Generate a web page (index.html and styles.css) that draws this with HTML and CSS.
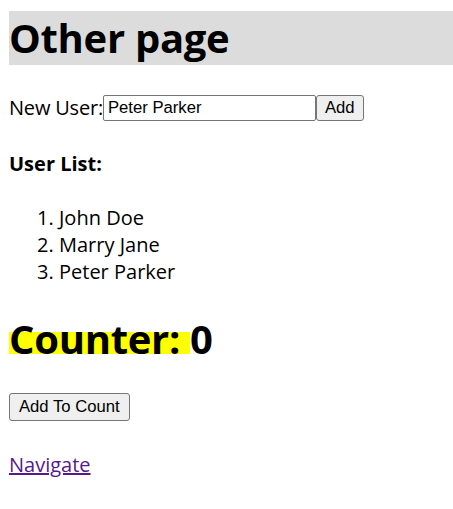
FILE: index.html
```html
<!DOCTYPE html>
<html lang="en">
<head>
    <meta charset="UTF-8">
    <title>Other page</title>
    <link rel="stylesheet" href="styles.css">
</head>
<body>
    <h1 class="page-title">Other page</h1>

    <form class="user-form">
        <label for="newUser">New User:</label>
        <input id="newUser" class="user-input" type="text" value="Peter Parker">
        <button type="submit" class="btn">Add</button>
    </form>

    <h4 class="list-title">User List:</h4>
    <ol class="user-list">
        <li>John Doe</li>
        <li>Marry Jane</li>
        <li>Peter Parker</li>
    </ol>

    <h1 class="counter"><span class="highlight">Counter: </span>0</h1>

    <div class="count-row">
        <button class="btn">Add To Count</button>
    </div>

    <p class="nav"><a href="#" class="nav-link">Navigate</a></p>
</body>
</html>
```

FILE: styles.css
```css
body {
    margin: 11px 0 11px 9px;
    font-family: 'Open Sans', 'Noto Sans CJK KR', sans-serif;
    font-size: 20px;
    line-height: 27px;
    color: #000;
    background: #fff;
}
.page-title {
    margin: 0 0 27px;
    font-size: 40px;
    line-height: 54px;
    font-weight: 700;
    letter-spacing: -0.3px;
    background: #dcdcdc;
}
.user-form {
    display: flex;
    align-items: center;
    height: 31px;
    margin: 0;
}
.user-form label {
    letter-spacing: -0.2px;
}
.user-input {
    width: 213px;
    height: 26px;
    box-sizing: border-box;
    padding: 1px 4px;
    border: 1px solid #767676;
    border-radius: 2px;
    font-family: 'Liberation Sans', Arial, sans-serif;
    font-size: 16.67px;
    color: #000;
}
.btn {
    height: 26px;
    box-sizing: border-box;
    padding: 1px 8px;
    background: #efefef;
    border: 1px solid #767676;
    border-radius: 3px;
    font-family: 'Liberation Sans', Arial, sans-serif;
    font-size: 16.67px;
    color: #000;
}
.list-title {
    margin: 27px 0;
    font-size: 20px;
    font-weight: 700;
}
.user-list {
    margin: 0;
    padding-left: 50px;
}
.counter {
    margin: 27px 0 0;
    font-size: 40px;
    line-height: 54px;
    font-weight: 700;
    letter-spacing: -0.3px;
}
.highlight {
    background: linear-gradient(to bottom, transparent 21px, #ffff00 21px, #ffff00 43px, transparent 43px);
}
.count-row {
    height: 28px;
    margin-top: 25px;
}
.count-row .btn {
    height: 28px;
    padding: 1px 9px;
}
.nav {
    margin: 32px 0 0;
}
.nav-link {
    color: #551a8b;
}
```
